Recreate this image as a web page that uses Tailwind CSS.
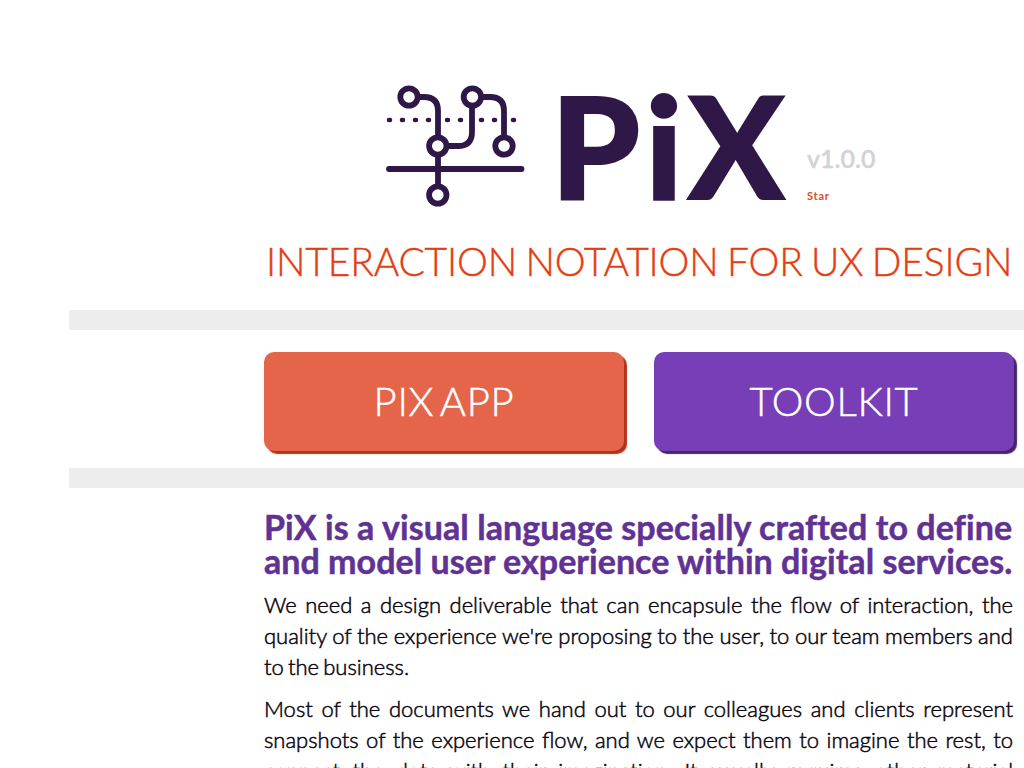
<!DOCTYPE html>
<html lang="en">
<head>
<meta charset="utf-8">
<title>PiX</title>
<script src="https://cdn.jsdelivr.net/npm/@tailwindcss/browser@4"></script>
</head>
<body class="h-screen overflow-hidden bg-white font-['Lato',sans-serif]">
<div class="ml-[69px]">
  <header class="pl-[195px] h-[310px] pt-[84px]">
    <div class="flex h-[142px] pl-[120px]">
      <svg class="shrink-0 mr-[25px]" width="142" height="124" viewBox="384 84 142 124" fill="none" stroke="#2f1847" stroke-width="5.8" stroke-linecap="round">
        <path d="M389 120h1M402 120h1M415 120h1M428 120h1M447 120h1M460 120h1M481 120h1M494 120h1M513 120h1" stroke-width="4.6"/>
        <path d="M418 97h6q14 0 14 14v75M482 97h8q14 0 14 14v26M472 106v26q0 14-14 14h-10M389 169H521.500"/>
        <g fill="#fff"><circle cx="409" cy="97" r="8.7"/><circle cx="472.400" cy="97" r="8.700"/><circle cx="437.800" cy="146" r="8.700"/><circle cx="504" cy="146" r="8.700"/><circle cx="437.800" cy="195" r="8.700"/></g>
      </svg>
      <h1 class="text-[142px] leading-[120px] font-black text-[#2f1847] w-[256px] shrink-0 tracking-[5.5px] [-webkit-text-stroke:2px_#2f1847]">PiX</h1>
      <div class="pt-[59px]">
        <div class="text-[25px] leading-[30px] font-semibold text-[#d3d1da] [-webkit-text-stroke:0.3px_#d3d1da]">v1.0.0</div>
        <div class="text-[11px] leading-[14px] mt-[16px] font-bold tracking-[0.8px] text-[#dd4b2a]">Star</div>
      </div>
    </div>
    <h2 class="mt-[11px] pl-[2px] text-[39px] leading-[48px] font-light text-[#e43d12] whitespace-nowrap tracking-[-0.17px] [word-spacing:-2px] [-webkit-text-stroke:0.4px_#e43d12]">INTERACTION NOTATION FOR UX DESIGN</h2>
  </header>
  <nav class="h-[178px] border-y-[20px] border-[#ededed] pl-[195px] pt-[22px] flex gap-[30px] text-white text-[40px] leading-[98px] font-light text-center [-webkit-text-stroke:0.5px_white]">
    <a class="shrink-0 w-[360px] h-[99px] rounded-[10px] bg-[#e5654b] shadow-[3px_3px_1px_#b4321a] tracking-[0.7px] [word-spacing:-4.5px]">PIX APP</a>
    <a class="shrink-0 w-[360px] h-[99px] rounded-[10px] bg-[#773eb8] shadow-[3px_3px_1px_#46246d] tracking-[0.7px]">TOOLKIT</a>
  </nav>
  <main class="ml-[195px] w-[749px] pt-[22px] text-[22px] leading-[31px] font-light text-[#08040e]">
    <h3 class="text-[34px] leading-[34px] font-bold text-[#5f3294] whitespace-nowrap"><span class="block tracking-[0.08px] [-webkit-text-stroke:0.5px_#5f3294]">PiX is a visual language specially crafted to define</span><span class="block tracking-[0.03px] [-webkit-text-stroke:0.5px_#5f3294]">and model user experience within digital services.</span></h3>
    <div class="mt-[11px] whitespace-nowrap [word-spacing:-1.8px] [-webkit-text-stroke:0.5px_#08040e]">
      <p class="[text-align-last:justify]">We need a design deliverable that can encapsule the flow of <span class="[font-variant-ligatures:none]">interaction,</span> the</p>
      <p class="[text-align-last:justify]">quality of the experience we're proposing to the user, to our team members and</p>
      <p>to the business.</p>
      <p class="mt-[11px] [text-align-last:justify]">Most of the documents we hand out to our colleagues and clients represent</p>
      <p class="[text-align-last:justify]">snapshots of the experience flow, and we expect them to imagine the rest, to</p>
      <p class="[text-align-last:justify]">connect the dots with their <span class="[font-variant-ligatures:none]">imagination.</span> It usually requires other material</p>
    </div>
  </main>
</div>
</body>
</html>
